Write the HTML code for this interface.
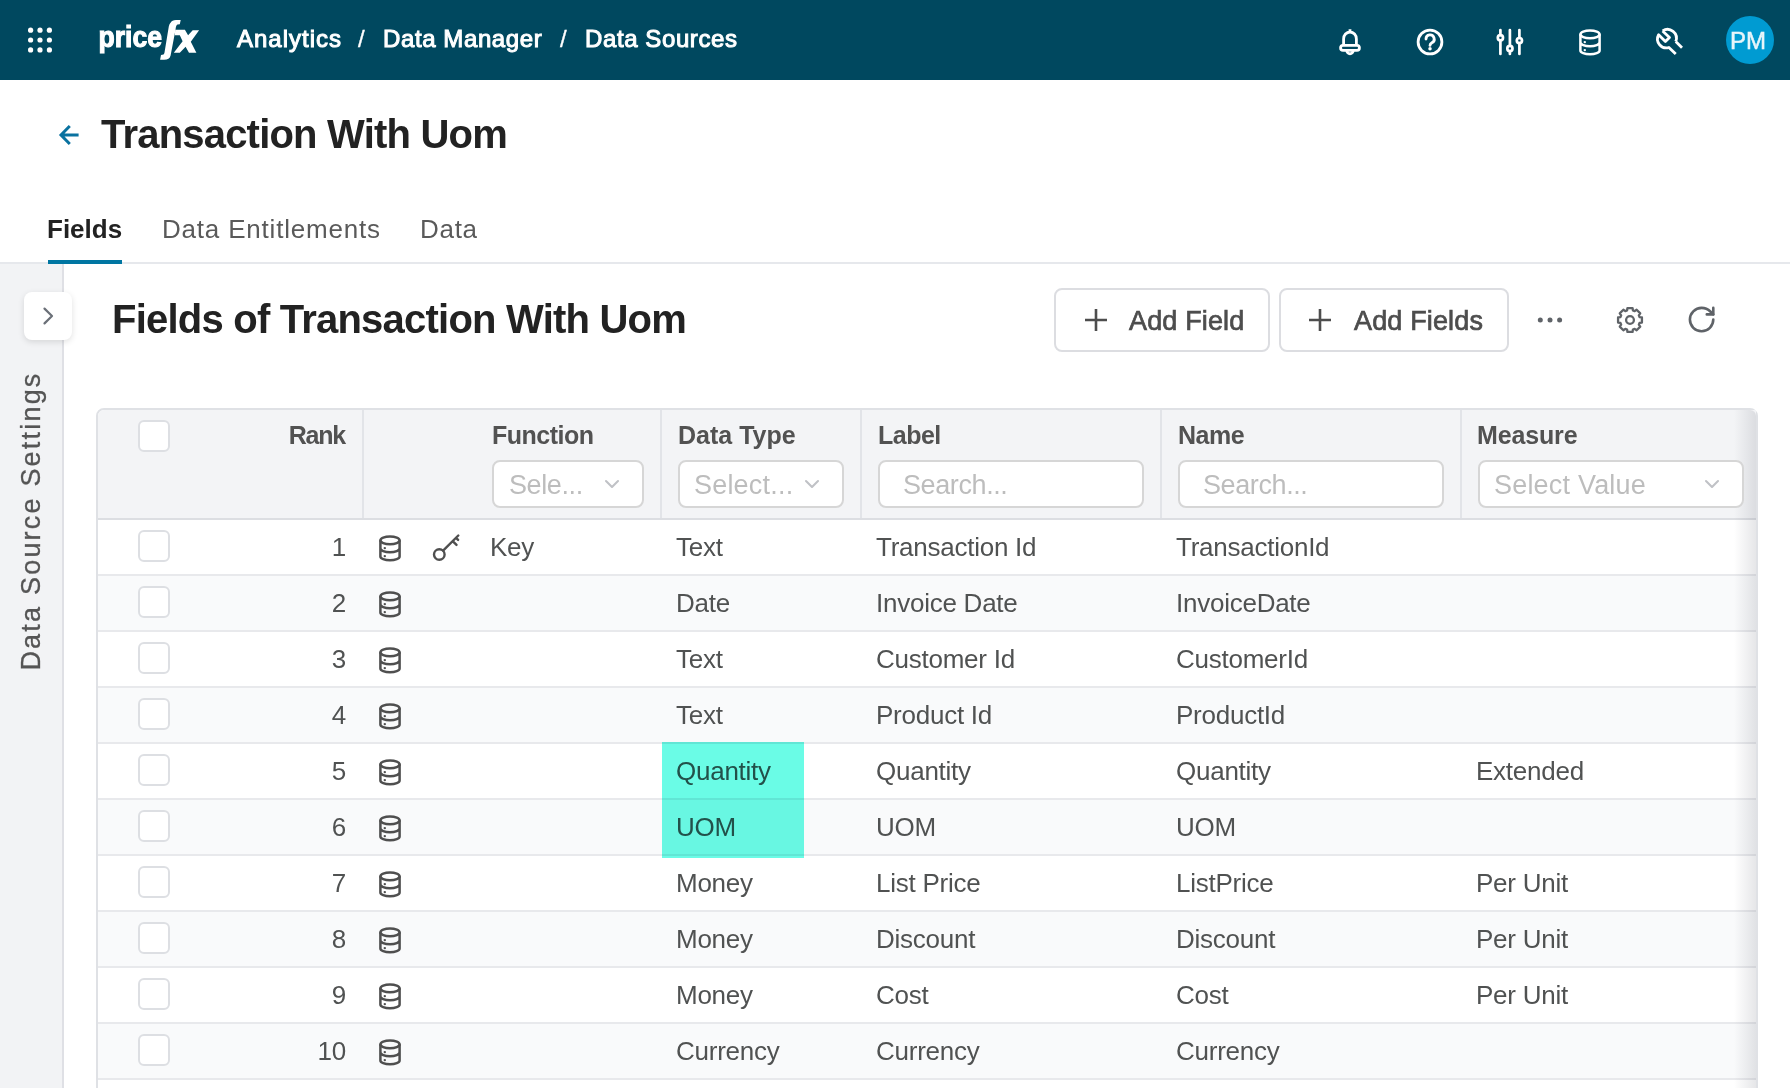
<!DOCTYPE html>
<html><head><meta charset="utf-8">
<style>
*{margin:0;padding:0;box-sizing:border-box}
html,body{width:1790px;height:1088px;overflow:hidden;background:#fff;font-family:"Liberation Sans",sans-serif}
.a{position:absolute;white-space:nowrap;line-height:1}
.ic{position:absolute;overflow:visible}
#hdr{position:absolute;left:0;top:0;width:1790px;height:80px;background:#00485f}
.bc{color:#fff;font-size:24px;font-weight:normal;-webkit-text-stroke:1px #fff;top:27.4px}
#side{position:absolute;left:0;top:264px;width:64px;height:824px;background:#f2f3f5;border-right:2px solid #dfe0e5}
#tabline{position:absolute;left:0;top:262px;width:1790px;height:2px;background:#e6e8ec}
.tab{font-size:26px;top:216px;color:#5a5a5a}
.btn{position:absolute;top:288px;height:64px;border:2px solid #dcdde1;border-radius:8px;background:#fff}
.btxt{font-size:27px;color:#4d4d4d;font-weight:normal;-webkit-text-stroke:0.7px #4d4d4d;top:308px;letter-spacing:0.15px}
#tbl{position:absolute;left:96px;top:408px;width:1662px;height:720px;border:2px solid #dfe1e5;border-radius:8px;overflow:hidden;background:#fff}
#thead{position:absolute;left:98px;top:410px;width:1658px;height:108px;background:#f3f4f6;border-top-left-radius:6px}
#thb{position:absolute;left:98px;top:518px;width:1658px;height:2px;background:#dcdee2}
.cd{position:absolute;top:410px;width:2px;height:108px;background:#e2e4e8}
.th{font-size:25px;font-weight:bold;color:#525252;top:423px;letter-spacing:-0.5px}
.flt{z-index:3;position:absolute;top:460px;height:48px;border:2px solid #d6d6d6;border-radius:8px;background:#fff}
.ph{z-index:4;font-size:27px;color:#bdbdbd;top:472px;letter-spacing:-0.4px}
.chev{z-index:4;top:477px}
.rw{position:absolute;left:98px;width:1658px;height:56px;border-bottom:2px solid #e8e9ec}
.odd{background:#fff}.even{background:#f9fafb}
.cb{position:absolute;left:138px;width:32px;height:32px;border:2px solid #dddfe3;border-radius:6px;background:#fff}
.td{font-size:26px;color:#505252;letter-spacing:-0.25px}
.rk{left:200px;width:146px;text-align:right}
.db{left:378px}
#shadow{z-index:2;position:absolute;left:1734px;top:410px;width:22px;height:678px;border-top-right-radius:6px;background:linear-gradient(to right,rgba(60,64,80,0),rgba(60,64,80,.13))}
</style></head>
<body>
<svg width="0" height="0" style="position:absolute">
 <defs>
  <symbol id="dbi" viewBox="0 0 24 28">
   <g fill="none" stroke="currentColor" stroke-width="2.5">
    <ellipse cx="12" cy="5.3" rx="9.6" ry="3.9"/>
    <path d="M2.4 5.3V21.45A9.6 3.9 0 0 0 21.6 21.45V5.3M2.4 13.35A9.6 3.9 0 0 0 21.6 13.35"/>
   </g>
   <circle cx="6.8" cy="13.1" r="1.2" fill="currentColor"/>
   <circle cx="6.8" cy="21.1" r="1.2" fill="currentColor"/>
  </symbol>
  <symbol id="keyi" viewBox="0 0 32 30">
   <g fill="none" stroke="currentColor" stroke-width="2.4" stroke-linecap="round">
    <circle cx="9.3" cy="21.5" r="5.3"/>
    <path d="M13.1 17.7L28.3 2.5M22.7 8.1L26.5 11.9M26 4.8L28.1 6.9"/>
   </g>
  </symbol>
 </defs>
</svg>
<div id="hdr">
  <svg class="ic" style="left:26px;top:26px" width="28" height="28" viewBox="0 0 28 28" fill="#fff">
    <circle cx="4.6" cy="4.2" r="2.6"/><circle cx="14" cy="4.2" r="2.6"/><circle cx="23.4" cy="4.2" r="2.6"/>
    <circle cx="4.6" cy="14" r="2.6"/><circle cx="14" cy="14" r="2.6"/><circle cx="23.4" cy="14" r="2.6"/>
    <circle cx="4.6" cy="23.9" r="2.6"/><circle cx="14" cy="23.9" r="2.6"/><circle cx="23.4" cy="23.9" r="2.6"/>
  </svg>
  <svg class="ic" style="left:0;top:0" width="210" height="80" viewBox="0 0 210 80">
    <text x="98.5" y="46.9" font-family="Liberation Sans" font-weight="bold" font-size="29.5" fill="#fff" stroke="#fff" stroke-width="1.1" textLength="63.5" lengthAdjust="spacingAndGlyphs">price</text>
    <path d="M170.6 22.8Q172 20.1 176 20.1L180.7 20.1L179.8 24.2L177.5 24.6Q176 25.2 175.5 29.7L170.6 55.4Q169.5 59.8 164.2 59.8L160.1 59.8L161 55L163.5 54.6Q164.2 54 164.5 52.5L168.8 26.5Q169.5 23.5 170.6 22.8Z" fill="#fff"/>
    <path d="M175.2 29.7L184.9 29.7L188.1 35.2L192.7 30.2L199.1 30.2L190.8 41.7L196.4 52.7L189 52.7L185.6 46.7L179.8 52.7L173.8 52.7L182.6 41.2L179.8 35.2L174.8 35.2Z" fill="#fff"/>
  </svg>
  <div class="a bc" style="left:237px;letter-spacing:1px">Analytics</div>
  <div class="a bc" style="left:358px;-webkit-text-stroke:0.3px #fff">/</div>
  <div class="a bc" style="left:383px;letter-spacing:0.6px">Data Manager</div>
  <div class="a bc" style="left:560px;-webkit-text-stroke:0.3px #fff">/</div>
  <div class="a bc" style="left:585px;letter-spacing:0.6px">Data Sources</div>
  <svg class="ic" style="left:1338px;top:28px" width="24" height="28" viewBox="0 0 24 28" fill="none" stroke="#fff" stroke-width="2.8" stroke-linejoin="round">
    <path d="M12 1.2V4M5.6 17.4V11A6.4 7 0 0 1 18.4 11V17.4"/>
    <rect x="2.6" y="17.4" width="18.8" height="5" rx="2.4"/>
    <path d="M8.8 22.6A3.2 3.2 0 0 0 15.2 22.6"/>
  </svg>
  <svg class="ic" style="left:1416px;top:28px" width="28" height="28" viewBox="0 0 28 28" fill="none" stroke="#fff" stroke-width="2.8" stroke-linecap="round">
    <circle cx="14" cy="14" r="11.9"/>
    <path d="M10 11A4.1 4.1 0 1 1 15.9 14.7C14.7 15.4 14 16 14 17.4"/>
    <circle cx="14" cy="20.7" r="1.75" fill="#fff" stroke="none"/>
  </svg>
  <svg class="ic" style="left:1496px;top:28px" width="28" height="28" viewBox="0 0 28 28" fill="none" stroke="#fff" stroke-width="2.7" stroke-linecap="round">
    <path d="M4.4 2V7.1M4.4 12.3V26M13.9 2V17.8M13.9 23V26M23.4 2V10M23.4 15.2V26"/>
    <circle cx="4.4" cy="9.7" r="2.6"/><circle cx="13.9" cy="20.4" r="2.6"/><circle cx="23.4" cy="12.6" r="2.6"/>
  </svg>
  <svg class="ic" style="left:1577.7px;top:28.5px;color:#fff" width="24" height="28"><use href="#dbi" stroke-width="2.5"/></svg>
  <svg class="ic" style="left:1652px;top:25px" width="34" height="34" viewBox="0 0 34 34" fill="none" stroke="#fff" stroke-width="2.8" stroke-linejoin="round">
    <path d="M10.6 5.9L17.5 12.5L13.4 16.6L6.6 9.7A8.9 8.9 0 0 0 16.9 22.5L23.75 29.1M23.75 16.6L30 22.8M23.75 16.6A8.9 8.9 0 0 0 10.6 5.9"/>
  </svg>
  <div class="a" style="left:1726px;top:16px;width:48px;height:48px;border-radius:50%;background:#009bd2"></div>
  <div class="a" style="left:1730px;top:29px;color:#e8f5fa;font-size:24px;-webkit-text-stroke:0.5px #e8f5fa">PM</div>
</div>

<svg class="ic" style="left:56px;top:122px" width="26" height="26" viewBox="0 0 26 26" fill="none" stroke="#0a72a0" stroke-width="3" stroke-linecap="butt" stroke-linejoin="miter">
  <path d="M22.6 13H5M13.8 4L5 13L13.8 22"/>
</svg>
<div class="a" style="left:101px;top:114px;font-size:40px;font-weight:bold;color:#222;letter-spacing:-0.8px">Transaction With Uom</div>

<div class="a tab" style="left:47px;color:#222;font-weight:bold">Fields</div>
<div class="a tab" style="left:162px;letter-spacing:0.8px">Data Entitlements</div>
<div class="a tab" style="left:420px;letter-spacing:0.7px">Data</div>
<div id="tabline"></div>
<div class="a" style="left:48px;top:260px;width:74px;height:4px;background:#0076a2"></div>

<div id="side"></div>
<div class="a" style="left:24px;top:292px;width:48px;height:48px;background:#fff;border-radius:8px;box-shadow:0 2px 6px rgba(0,0,0,.12)"></div>
<svg class="ic" style="left:40px;top:304px" width="16" height="24" viewBox="0 0 16 24" fill="none" stroke="#6b7078" stroke-width="2.2" stroke-linecap="round" stroke-linejoin="round">
  <path d="M4.5 4.6L12 12L4.5 19.4"/>
</svg>
<div class="a" style="left:31px;top:521px;font-size:27px;color:#555;-webkit-text-stroke:0.3px #555;letter-spacing:2.2px;transform:translate(-50%,-50%) rotate(-90deg);transform-origin:center">Data Source Settings</div>

<div class="a" style="left:112px;top:299px;font-size:40px;font-weight:bold;color:#222;letter-spacing:-0.78px">Fields of Transaction With Uom</div>

<div class="btn" style="left:1054px;width:216px"></div>
<div class="btn" style="left:1279px;width:230px"></div>
<svg class="ic" style="left:1084px;top:308px" width="24" height="24" viewBox="0 0 24 24" stroke="#4d4d4d" stroke-width="2.6"><path d="M12 1V23M1 12H23"/></svg>
<svg class="ic" style="left:1308px;top:308px" width="24" height="24" viewBox="0 0 24 24" stroke="#4d4d4d" stroke-width="2.6"><path d="M12 1V23M1 12H23"/></svg>
<div class="a btxt" style="left:1129px">Add Field</div>
<div class="a btxt" style="left:1354px">Add Fields</div>
<svg class="ic" style="left:1536px;top:314px" width="28" height="12" viewBox="0 0 28 12" fill="#5f6368"><circle cx="4.3" cy="6" r="2.5"/><circle cx="14" cy="6" r="2.5"/><circle cx="23.6" cy="6" r="2.5"/></svg>
<svg class="ic" style="left:1616px;top:306px" width="28" height="28" viewBox="0 0 28 28" fill="none" stroke="#5f6368" stroke-width="2.3" stroke-linejoin="round">
  <path d="M11.04 4.45 L11.46 2.07 L16.54 2.07 L16.96 4.45 L18.67 5.16 L20.64 3.76 L24.24 7.36 L22.84 9.33 L23.55 11.04 L25.93 11.46 L25.93 16.54 L23.55 16.96 L22.84 18.67 L24.24 20.64 L20.64 24.24 L18.67 22.84 L16.96 23.55 L16.54 25.93 L11.46 25.93 L11.04 23.55 L9.33 22.84 L7.36 24.24 L3.76 20.64 L5.16 18.67 L4.45 16.96 L2.07 16.54 L2.07 11.46 L4.45 11.04 L5.16 9.33 L3.76 7.36 L7.36 3.76 L9.33 5.16Z"/><circle cx="14" cy="14" r="3.9"/>
</svg>
<svg class="ic" style="left:1686px;top:304px" width="31.2" height="31.2" viewBox="0 0 24 24" fill="none" stroke="#5f6368" stroke-width="2" stroke-linecap="round" stroke-linejoin="round">
  <path d="M21 12a9 9 0 1 1-9-9c2.52 0 4.93 1 6.74 2.74L21 8"/><path d="M21 3v5h-5"/>
</svg>

<div id="tbl"></div>
<div id="thead"></div>
<div id="thb"></div>
<div class="cd" style="left:362px"></div>
<div class="cd" style="left:660px"></div>
<div class="cd" style="left:860px"></div>
<div class="cd" style="left:1160px"></div>
<div class="cd" style="left:1460px"></div>
<div class="cb" style="top:420px"></div>
<div class="a th" style="left:200px;width:145px;text-align:right;letter-spacing:-1.2px">Rank</div>
<div class="a th" style="left:492px">Function</div>
<div class="a th" style="left:678px;letter-spacing:0px">Data Type</div>
<div class="a th" style="left:878px">Label</div>
<div class="a th" style="left:1178px">Name</div>
<div class="a th" style="left:1477px;letter-spacing:-0.15px">Measure</div>
<div class="flt" style="left:492px;width:152px"></div>
<div class="flt" style="left:678px;width:166px"></div>
<div class="flt" style="left:878px;width:266px"></div>
<div class="flt" style="left:1178px;width:266px"></div>
<div class="flt" style="left:1478px;width:266px"></div>
<div class="a ph" style="left:509px">Sele...</div>
<div class="a ph" style="left:694px;letter-spacing:0.2px">Select...</div>
<div class="a ph" style="left:903px">Search...</div>
<div class="a ph" style="left:1203px">Search...</div>
<div class="a ph" style="left:1494px;letter-spacing:0.2px">Select Value</div>
<svg class="ic chev" style="left:604px" width="16" height="14" viewBox="0 0 16 14" fill="none" stroke="#c0c2c6" stroke-width="2.1" stroke-linecap="round" stroke-linejoin="round"><path d="M2 4L8 10L14 4"/></svg>
<svg class="ic chev" style="left:804px" width="16" height="14" viewBox="0 0 16 14" fill="none" stroke="#c0c2c6" stroke-width="2.1" stroke-linecap="round" stroke-linejoin="round"><path d="M2 4L8 10L14 4"/></svg>
<svg class="ic chev" style="left:1704px" width="16" height="14" viewBox="0 0 16 14" fill="none" stroke="#c0c2c6" stroke-width="2.1" stroke-linecap="round" stroke-linejoin="round"><path d="M2 4L8 10L14 4"/></svg>

<div id="rows" style="color:#4f4f4f">
<div class="rw odd" style="top:520px"></div>
<div class="cb" style="top:530px"></div>
<div class="a td rk" style="top:534px">1</div>
<svg class="ic db" style="top:534.7px" width="24" height="28" viewBox="0 0 24 28"><use href="#dbi"/></svg>
<svg class="ic" style="left:430px;top:533px" width="32" height="30" viewBox="0 0 32 30"><use href="#keyi"/></svg>
<div class="a td" style="left:490px;top:534px">Key</div>
<div class="a td" style="left:676px;top:534px">Text</div>
<div class="a td" style="left:876px;top:534px">Transaction Id</div>
<div class="a td" style="left:1176px;top:534px">TransactionId</div>
<div class="rw even" style="top:576px"></div>
<div class="cb" style="top:586px"></div>
<div class="a td rk" style="top:590px">2</div>
<svg class="ic db" style="top:590.7px" width="24" height="28" viewBox="0 0 24 28"><use href="#dbi"/></svg>
<div class="a td" style="left:676px;top:590px">Date</div>
<div class="a td" style="left:876px;top:590px">Invoice Date</div>
<div class="a td" style="left:1176px;top:590px">InvoiceDate</div>
<div class="rw odd" style="top:632px"></div>
<div class="cb" style="top:642px"></div>
<div class="a td rk" style="top:646px">3</div>
<svg class="ic db" style="top:646.7px" width="24" height="28" viewBox="0 0 24 28"><use href="#dbi"/></svg>
<div class="a td" style="left:676px;top:646px">Text</div>
<div class="a td" style="left:876px;top:646px">Customer Id</div>
<div class="a td" style="left:1176px;top:646px">CustomerId</div>
<div class="rw even" style="top:688px"></div>
<div class="cb" style="top:698px"></div>
<div class="a td rk" style="top:702px">4</div>
<svg class="ic db" style="top:702.7px" width="24" height="28" viewBox="0 0 24 28"><use href="#dbi"/></svg>
<div class="a td" style="left:676px;top:702px">Text</div>
<div class="a td" style="left:876px;top:702px">Product Id</div>
<div class="a td" style="left:1176px;top:702px">ProductId</div>
<div class="rw odd" style="top:744px"></div>
<div class="cb" style="top:754px"></div>
<div class="a td rk" style="top:758px">5</div>
<svg class="ic db" style="top:758.7px" width="24" height="28" viewBox="0 0 24 28"><use href="#dbi"/></svg>
<div class="a td" style="left:676px;top:758px">Quantity</div>
<div class="a td" style="left:876px;top:758px">Quantity</div>
<div class="a td" style="left:1176px;top:758px">Quantity</div>
<div class="a td" style="left:1476px;top:758px">Extended</div>
<div class="rw even" style="top:800px"></div>
<div class="cb" style="top:810px"></div>
<div class="a td rk" style="top:814px">6</div>
<svg class="ic db" style="top:814.7px" width="24" height="28" viewBox="0 0 24 28"><use href="#dbi"/></svg>
<div class="a td" style="left:676px;top:814px">UOM</div>
<div class="a td" style="left:876px;top:814px">UOM</div>
<div class="a td" style="left:1176px;top:814px">UOM</div>
<div class="rw odd" style="top:856px"></div>
<div class="cb" style="top:866px"></div>
<div class="a td rk" style="top:870px">7</div>
<svg class="ic db" style="top:870.7px" width="24" height="28" viewBox="0 0 24 28"><use href="#dbi"/></svg>
<div class="a td" style="left:676px;top:870px">Money</div>
<div class="a td" style="left:876px;top:870px">List Price</div>
<div class="a td" style="left:1176px;top:870px">ListPrice</div>
<div class="a td" style="left:1476px;top:870px">Per Unit</div>
<div class="rw even" style="top:912px"></div>
<div class="cb" style="top:922px"></div>
<div class="a td rk" style="top:926px">8</div>
<svg class="ic db" style="top:926.7px" width="24" height="28" viewBox="0 0 24 28"><use href="#dbi"/></svg>
<div class="a td" style="left:676px;top:926px">Money</div>
<div class="a td" style="left:876px;top:926px">Discount</div>
<div class="a td" style="left:1176px;top:926px">Discount</div>
<div class="a td" style="left:1476px;top:926px">Per Unit</div>
<div class="rw odd" style="top:968px"></div>
<div class="cb" style="top:978px"></div>
<div class="a td rk" style="top:982px">9</div>
<svg class="ic db" style="top:982.7px" width="24" height="28" viewBox="0 0 24 28"><use href="#dbi"/></svg>
<div class="a td" style="left:676px;top:982px">Money</div>
<div class="a td" style="left:876px;top:982px">Cost</div>
<div class="a td" style="left:1176px;top:982px">Cost</div>
<div class="a td" style="left:1476px;top:982px">Per Unit</div>
<div class="rw even" style="top:1024px"></div>
<div class="cb" style="top:1034px"></div>
<div class="a td rk" style="top:1038px">10</div>
<svg class="ic db" style="top:1038.7px" width="24" height="28" viewBox="0 0 24 28"><use href="#dbi"/></svg>
<div class="a td" style="left:676px;top:1038px">Currency</div>
<div class="a td" style="left:876px;top:1038px">Currency</div>
<div class="a td" style="left:1176px;top:1038px">Currency</div>
<div class="rw odd" style="top:1080px"></div>
</div>
<div class="a" style="left:662px;top:742px;width:142px;height:116px;background:#6afce6;mix-blend-mode:multiply"></div>
<div id="shadow"></div>
</body></html>
